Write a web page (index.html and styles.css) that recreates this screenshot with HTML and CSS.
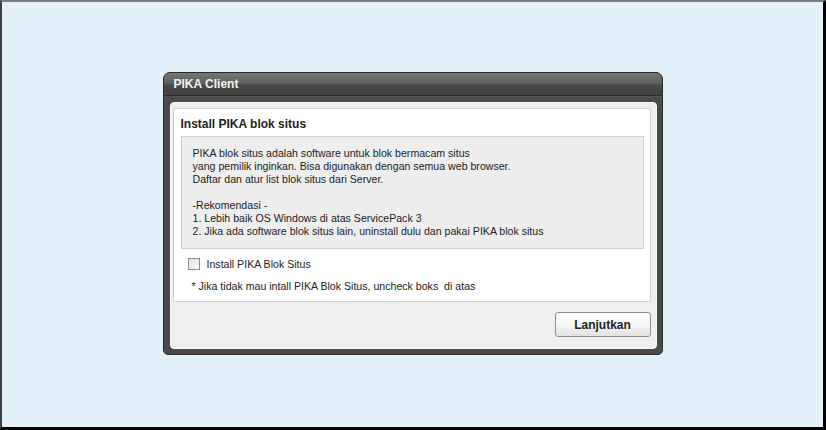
FILE: index.html
```html
<!DOCTYPE html>
<html>
<head>
<meta charset="utf-8">
<link rel="stylesheet" href="styles.css">
</head>
<body>
<div class="screen">
  <div class="dialog">
    <div class="titlebar">PIKA Client</div>
    <div class="frame">
      <div class="panel">
        <div class="card">
          <div class="card-title">Install PIKA blok situs</div>
          <div class="info">
            <p>PIKA blok situs adalah software untuk blok bermacam situs<br>yang pemilik inginkan. Bisa digunakan dengan semua web browser.<br>Daftar dan atur list blok situs dari Server.</p>
            <p>-Rekomendasi -<br>1. Lebih baik OS Windows di atas ServicePack 3<br>2. Jika ada software blok situs lain, uninstall dulu dan pakai PIKA blok situs</p>
          </div>
          <label class="check"><span class="box"></span>Install PIKA Blok Situs</label>
          <div class="note">* Jika tidak mau intall PIKA Blok Situs, uncheck boks&nbsp; di atas</div>
        </div>
        <div class="actions">
          <button class="btn">Lanjutkan</button>
        </div>
      </div>
    </div>
  </div>
</div>
</body>
</html>
```
FILE: styles.css
```css
html, body {
  margin: 0;
  padding: 0;
}
body {
  font-family: "Liberation Sans", Arial, sans-serif;
  font-size: 10.6px;
  color: #222;
}
.screen {
  box-sizing: border-box;
  width: 826px;
  height: 430px;
  background: #e3f1fb;
  border-top: 2px solid #7e7e7e;
  border-left: 2px solid #404040;
  border-right: 3px solid #000;
  border-bottom: 3px solid #000;
  display: flex;
  align-items: flex-start;
  justify-content: center;
  padding-top: 70px;
}
.dialog {
  box-sizing: border-box;
  width: 500px;
  height: 283px;
  background: #4a4a4a;
  border: 1px solid #2a2a2a;
  border-radius: 7px 7px 5px 5px;
  display: flex;
  flex-direction: column;
  overflow: hidden;
}
.titlebar {
  height: 22px;
  line-height: 22px;
  padding-left: 10px;
  color: #f2f2f2;
  font-weight: bold;
  font-size: 12px;
  background: linear-gradient(#767676 0%, #606060 45%, #484848 55%, #424242 100%);
  border-bottom: 1px solid #2c2c2c;
}
.frame {
  flex: 1;
  padding: 5px 5px 5px 6px;
  display: flex;
  border-top: 1px solid #555;
}
.panel {
  flex: 1;
  background: #efefef;
  border: 1px solid #fafafa;
  border-radius: 4px;
  padding: 5px 5px 0 2px;
  display: flex;
  flex-direction: column;
}
.card {
  background: #fff;
  border: 1px solid #cfcfcf;
  border-radius: 3px;
  padding: 8px 6px 6px 7px;
  height: 194px;
  box-sizing: border-box;
}
.card-title {
  font-weight: bold;
  font-size: 12px;
  color: #222;
  line-height: 14px;
  margin-bottom: 5px;
}
.info {
  background: #eeeeee;
  border: 1px solid #d0d0d0;
  padding: 10px 11px 10px 11px;
  line-height: 13px;
  color: #222;
}
.info p {
  margin: 0;
}
.info p + p {
  margin-top: 13px;
}
.check {
  display: flex;
  align-items: center;
  margin: 8px 0 0 7px;
  line-height: 14px;
}
.box {
  box-sizing: border-box;
  width: 12px;
  height: 12px;
  border: 1px solid #8a8a8a;
  background: linear-gradient(135deg, #e0e0e0, #fbfbfb);
  margin-right: 7px;
}
.note {
  margin: 8px 0 0 11px;
  line-height: 14px;
}
.actions {
  display: flex;
  justify-content: flex-end;
  padding-top: 10px;
}
.btn {
  box-sizing: border-box;
  width: 96px;
  height: 25px;
  border: 1px solid #8f8f8f;
  border-radius: 3px;
  background: linear-gradient(#ffffff, #f3f3f3 60%, #e2e2e2);
  font-family: "Liberation Sans", Arial, sans-serif;
  font-weight: bold;
  font-size: 12px;
  color: #222;
  padding: 0;
}
```
